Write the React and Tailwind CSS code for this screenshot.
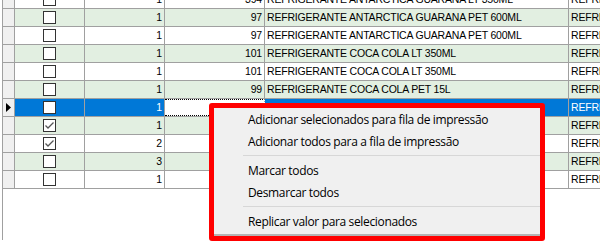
const rows = [
  { qty: '1', code: '394', desc: 'REFRIGERANTE ANTARCTICA GUARANA LT 350ML', green: false },
  { qty: '1', code: '97', desc: 'REFRIGERANTE ANTARCTICA GUARANA PET 600ML', green: true },
  { qty: '1', code: '97', desc: 'REFRIGERANTE ANTARCTICA GUARANA PET 600ML', green: false },
  { qty: '1', code: '101', desc: 'REFRIGERANTE COCA COLA LT 350ML', green: true },
  { qty: '1', code: '101', desc: 'REFRIGERANTE COCA COLA LT 350ML', green: false },
  { qty: '1', code: '99', desc: 'REFRIGERANTE COCA COLA PET 15L', green: true },
  { qty: '1', code: '', desc: '', selected: true },
  { qty: '1', code: '', desc: '', green: true, checked: true },
  { qty: '2', code: '', desc: '', green: false, checked: true },
  { qty: '3', code: '', desc: '', green: true },
  { qty: '1', code: '', desc: '', green: false },
]

function CheckBox({ checked }) {
  return (
    <div className="w-[13px] h-[13px] border border-[#333333] bg-white flex items-center justify-center">
      {checked && (
        <svg width="11" height="11" viewBox="0 0 11 11">
          <path d="M1.5 5.5 L4 8 L9.5 2.5" fill="none" stroke="#555" strokeWidth="1.3" />
        </svg>
      )}
    </div>
  )
}

function Row({ qty, code, desc, green, checked, selected }) {
  const bg = selected ? 'bg-[#0078d7]' : green ? 'bg-[#e2efe1]' : 'bg-white'
  const txt = selected ? 'text-white' : 'text-black'
  return (
    <div className="flex h-[18px] border-b border-[#a0a0a0]">
      <div className="w-[12px] shrink-0 border-r border-[#a0a0a0] bg-[#f0f0f0] flex items-center justify-center">
        {selected && (
          <svg width="5" height="9" viewBox="0 0 5 9">
            <path d="M0 0 L5 4.5 L0 9 Z" fill="#000" />
          </svg>
        )}
      </div>
      <div className={`w-[70px] shrink-0 border-r border-[#a0a0a0] flex items-center justify-center ${bg}`}>
        <CheckBox checked={checked} />
      </div>
      <div className={`w-[80px] shrink-0 border-r border-[#a0a0a0] flex items-center justify-end pr-[2px] ${bg} ${txt}`}>
        {qty}
      </div>
      {selected ? (
        <div className="w-[100px] shrink-0 border-r border-[#a0a0a0] bg-white border-y border-dotted border-y-black" />
      ) : (
        <div className={`w-[100px] shrink-0 border-r border-[#a0a0a0] flex items-center justify-end pr-[2px] ${bg}`}>
          {code}
        </div>
      )}
      <div className={`w-[304px] shrink-0 border-r border-[#a0a0a0] flex items-center pl-[2px] whitespace-nowrap overflow-hidden ${bg} ${txt}`}>
        {desc}
      </div>
      <div className={`flex-1 flex items-center pl-[2px] whitespace-nowrap overflow-hidden ${bg} ${txt}`}>
        REFRIGERANTE
      </div>
    </div>
  )
}

function MenuItem({ children }) {
  return <div className="h-[22px] flex items-center pl-[34px] pt-[2px]">{children}</div>
}

function Separator() {
  return (
    <div className="h-[7px] pl-[29px] flex items-center">
      <div className="w-full h-px bg-[#d7d7d7]" />
    </div>
  )
}

export default function App() {
  return (
    <div className="relative w-[600px] h-[249px] bg-white overflow-hidden">
      <div className="ml-[2px] h-full border-l border-[#a0a0a0] text-[10.5px] tracking-[-0.2px] font-['Liberation_Sans',sans-serif] leading-none">
        <div className="-mt-[9px]">
          {rows.map((r, i) => <Row key={i} {...r} />)}
        </div>
      </div>

      <div className="absolute left-[209px] top-[103px] w-[336px] h-[138px] border-[5px] border-[#ff0000] rounded-[3px] bg-[#f0f0f0] overflow-hidden">
        <div className="h-full flex flex-col text-[12px] tracking-[-0.35px] font-['Open_Sans',sans-serif] text-black">
          <MenuItem>Adicionar selecionados para fila de impressão</MenuItem>
          <MenuItem>Adicionar todos para a fila de impressão</MenuItem>
          <Separator />
          <MenuItem>Marcar todos</MenuItem>
          <MenuItem>Desmarcar todos</MenuItem>
          <Separator />
          <MenuItem>Replicar valor para selecionados</MenuItem>
          <div className="mt-auto h-[2px] bg-[#b4b4b4]" />
        </div>
      </div>
    </div>
  )
}
